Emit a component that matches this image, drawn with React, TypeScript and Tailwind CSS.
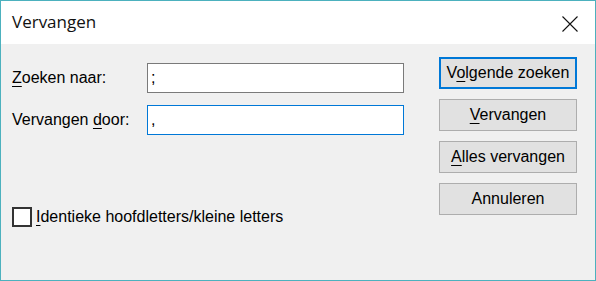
import type { ReactNode } from "react";

type DialogButton = {
  before: string;
  key: string;
  after: string;
  focused?: boolean;
};

const BUTTONS: DialogButton[] = [
  { before: "V", key: "o", after: "lgende zoeken", focused: true },
  { before: "", key: "V", after: "ervangen" },
  { before: "", key: "A", after: "lles vervangen" },
  { before: "Annuleren", key: "", after: "" },
];

function Mnemonic({ children }: { children: ReactNode }) {
  return (
    <span className="underline decoration-1 underline-offset-[3px]">
      {children}
    </span>
  );
}

export default function App() {
  return (
    <div className="flex h-[281px] w-[596px] flex-col border border-[#4cb1be] bg-[#f0f0f0] font-['Liberation_Sans',Arial,sans-serif] text-[16px] text-black">
      <header className="flex h-[43px] items-center justify-between bg-white pl-[11px] pr-[17px]">
        <span className="pb-[2px] font-['Open_Sans','Noto_Sans',sans-serif] text-[17px] text-[#111]">
          Vervangen
        </span>
        <svg width="16" height="16" viewBox="0 0 16 16" className="mt-[2px]">
          <path d="M0.5 0.5 L15.5 15.5 M15.5 0.5 L0.5 15.5" stroke="#111" strokeWidth="1.1" />
        </svg>
      </header>

      <main className="flex flex-1 pl-[11px] pr-[18px]">
        <section className="flex flex-1 flex-col pt-[19px]">
          <div className="flex h-[30px] items-center">
            <label className="w-[135px]">
              <Mnemonic>Z</Mnemonic>oeken naar:
            </label>
            <div className="flex h-[30px] w-[257px] items-center border border-[#7a7a7a] bg-white pl-[3px]">
              ;
            </div>
          </div>
          <div className="mt-[12px] flex h-[30px] items-center">
            <label className="w-[135px]">
              Vervangen <Mnemonic>d</Mnemonic>oor:
            </label>
            <div className="flex h-[30px] w-[257px] items-center border border-[#0078d7] bg-white pl-[3px]">
              ,
            </div>
          </div>
          <label className="mt-[70px] flex items-center gap-[4px]">
            <span className="h-[20px] w-[20px] border-2 border-[#333] bg-white" />
            <span>
              <Mnemonic>I</Mnemonic>dentieke hoofdletters/kleine letters
            </span>
          </label>
        </section>

        <section className="flex w-[138px] flex-col gap-[10px] pt-[13px]">
          {BUTTONS.map((b) => (
            <button
              key={b.before + b.key + b.after}
              type="button"
              className={`flex h-[32px] items-center justify-center bg-[#e1e1e1] ${
                b.focused ? "border-2 border-[#0078d7]" : "border border-[#adadad]"
              }`}
            >
              <span>
                {b.before}
                {b.key && <Mnemonic>{b.key}</Mnemonic>}
                {b.after}
              </span>
            </button>
          ))}
        </section>
      </main>
    </div>
  );
}
